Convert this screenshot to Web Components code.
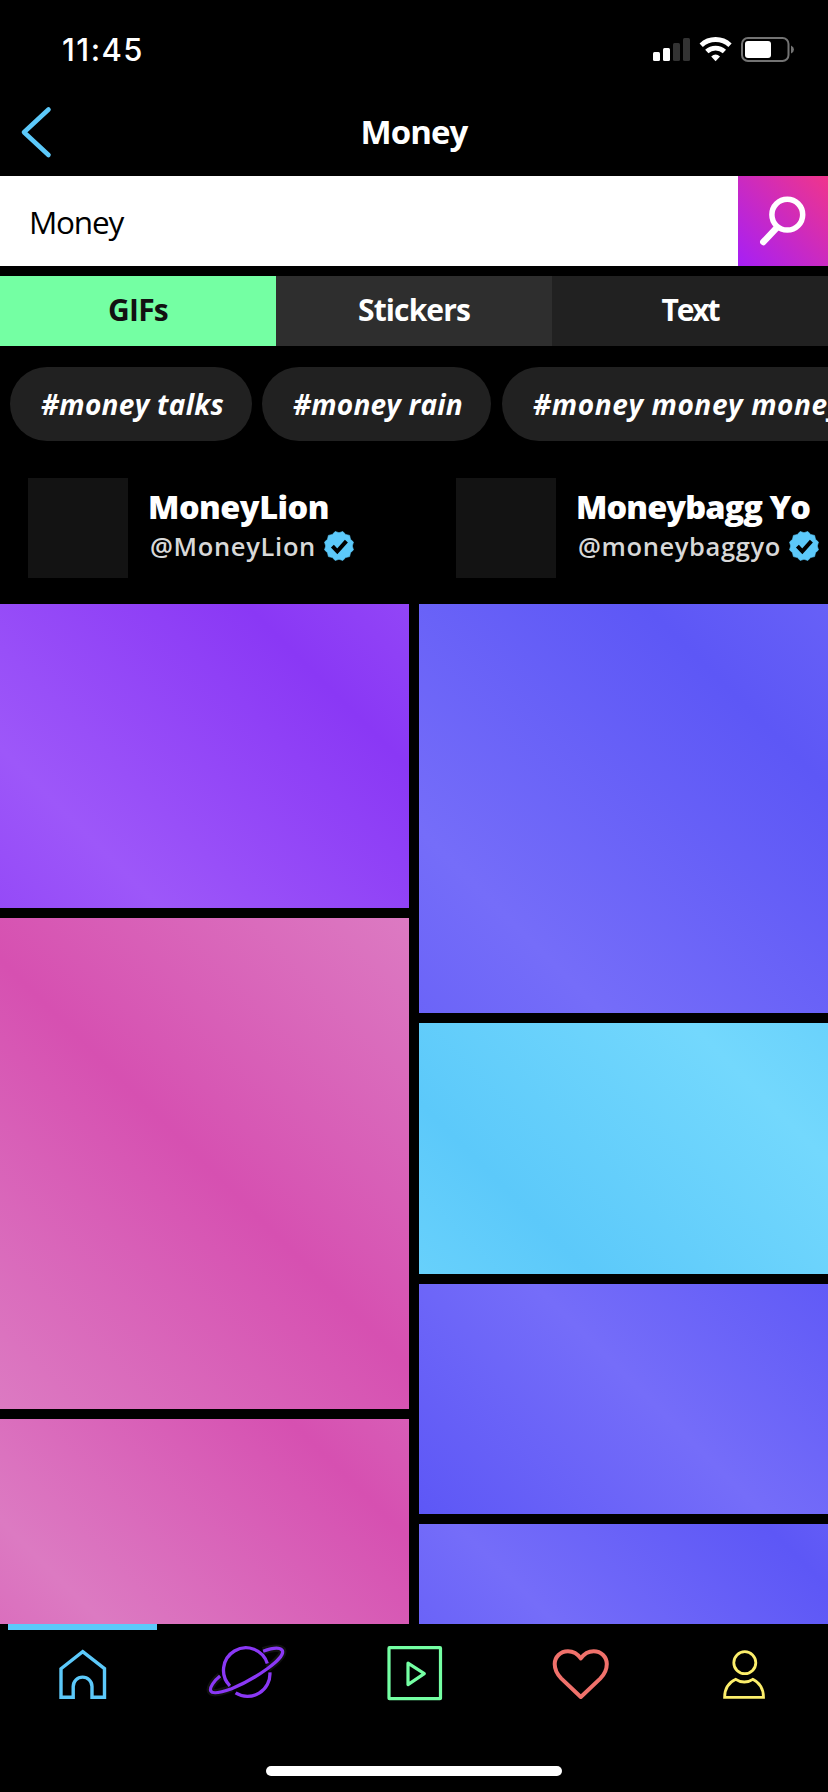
<!DOCTYPE html>
<html lang="en">
<head>
<meta charset="utf-8">
<title>Money</title>
<style>
html, body { margin: 0; background: #000; overflow: hidden; }
body { width: 828px; height: 1792px; font-family: "Open Sans", "Noto Sans", sans-serif; color: #fff; }
</style>
</head>
<body>
<gif-app></gif-app>
<script>
const define = (name, html, setup) => {
  const tpl = document.createElement('template');
  tpl.innerHTML = html;
  customElements.define(name, class extends HTMLElement {
    connectedCallback() {
      if (this.shadowRoot) return;
      this.attachShadow({ mode: 'open' }).appendChild(tpl.content.cloneNode(true));
      if (setup) setup(this, this.shadowRoot);
    }
  });
};

/* One line of text, tracked so that it takes exactly the given width. */
define('fit-text', `<style>
:host { display: block; white-space: pre; flex: none; }
span { display: inline-block; white-space: pre; }
</style><span></span>`, (el, root) => {
  const s = root.querySelector('span');
  s.textContent = el.getAttribute('text');
  const w = +el.getAttribute('w');
  s.style.letterSpacing = (w - s.getBoundingClientRect().width) / s.textContent.length + 'px';
  el.style.width = w + 'px';
});

define('status-bar', `<style>
:host { display: flex; height: 88px; padding: 12px 33px 0 62px; box-sizing: border-box; justify-content: space-between; }
fit-text { font: 500 31px/76px Inter, sans-serif; }
svg { display: block; margin-top: 20px; }
</style>
<fit-text text="11:45" w="82"></fit-text>
<svg width="144" height="34" viewBox="651 32 144 34" fill="#fff">
<rect x="653" y="52" width="7" height="9" rx="1.5"/><rect x="663" y="48" width="7" height="13" rx="1.5"/>
<rect x="673" y="43" width="7" height="18" rx="1.5" fill="#333"/><rect x="683" y="38" width="7" height="23" rx="1.5" fill="#333"/>
<g fill="none" stroke="#fff" stroke-width="4.8"><path d="M701.2 45.2A21 21 0 0 1 730 45.2"/><path d="M706.8 51.6A13 13 0 0 1 724.4 51.6"/></g>
<path d="M711.2 56.4Q715.6 52.8 720 56.4L715.6 61.2Z"/>
<rect x="742" y="38" width="46.5" height="23" rx="6" fill="none" stroke="#737373" stroke-width="2"/>
<rect x="745" y="41" width="26" height="17" rx="3"/><path d="M791 45.5q3 1.5 3 4t-3 4z" fill="#737373"/>
</svg>`);

define('title-bar', `<style>
:host { display: grid; grid-template-columns: 1fr auto 1fr; height: 88px; align-items: center; }
svg { display: block; margin-left: 18px; }
fit-text { font-weight: 700; font-size: 33px; line-height: 88px; }
</style>
<svg width="40" height="60" viewBox="18 102 40 60" fill="none" stroke="#5cc9fa" stroke-width="4.6" stroke-linecap="round" stroke-linejoin="round"><path d="M48.5 109.5L24 132.3L48.5 155"/></svg>
<fit-text text="Money" w="107"></fit-text><i></i>`);

define('search-bar', `<style>
:host { display: flex; height: 90px; background: #fff; color: #000; }
.field { flex: 1; padding-left: 29px; font-size: 31.5px; line-height: 91px; }
.go { width: 90px; background: linear-gradient(45deg, #a61ff6, #f0358b); }
svg { display: block; }
</style>
<div class="field"><fit-text text="Money" w="94"></fit-text></div>
<div class="go"><svg width="90" height="90" viewBox="738 176 90 90" fill="none" stroke="#fff" stroke-linecap="round"><circle cx="787.3" cy="214.7" r="15.4" stroke-width="5.5"/><path d="M776.5 228L763.3 242" stroke-width="6.4"/></svg></div>`);

define('tab-row', `<style>
:host { display: grid; grid-template-columns: repeat(3, 1fr); height: 70px; margin-top: 10px; font-weight: 700; font-size: 30px; line-height: 68px; }
div { display: flex; justify-content: center; background: #212121; }
div:nth-child(2) { background: #74ffa3; color: #121212; }
div:nth-child(3) { background: #2e2e2e; }
</style><div><fit-text text="GIFs" w="60"></fit-text></div><div><fit-text text="Stickers" w="112"></fit-text></div><div><fit-text text="Text" w="57"></fit-text></div>`);

define('tag-row', `<style>
:host { display: flex; gap: 10px; margin-top: 21px; padding-left: 10px; overflow: hidden; font: italic 700 28px/75px "Open Sans", sans-serif; }
div { flex: none; box-sizing: border-box; height: 74px; border-radius: 37px; background: #212121; padding-left: 31px; }
</style>
<div style="width:242px"><fit-text text="#money talks" w="183"></fit-text></div>
<div style="width:229px"><fit-text text="#money rain" w="170"></fit-text></div>
<div style="width:370px;margin-left:1px"><fit-text text="#money money money" w="310"></fit-text></div>`);

const scallop = Array.from({ length: 24 }, (_, i) => {
  const r = i % 2 ? 15 : 13.3, a = i * Math.PI / 12;
  return (15 + r * Math.sin(a)).toFixed(2) + ',' + (15 - r * Math.cos(a)).toFixed(2);
}).join(' ');

define('channel-card', `<style>
:host { display: flex; flex: none; width: 428px; }
.pic { width: 100px; height: 100px; background: #131313; margin-right: 20px; flex: none; }
.col { padding-top: 11px; }
.name { font-weight: 800; font-size: 32.5px; line-height: 36px; }
.row { display: flex; align-items: center; height: 41px; }
.handle { font-weight: 600; font-size: 25.5px; line-height: 42px; color: #d8d8d8; margin: 0 8px 0 2px; }
svg { display: block; flex: none; }
</style>
<div class="pic"></div><div class="col"><fit-text class="name"></fit-text><div class="row"><fit-text class="handle"></fit-text>
<svg width="30" height="30" viewBox="0 0 30 30"><polygon points="${scallop}" fill="#5cc9fa" stroke="#5cc9fa" stroke-width=".6" stroke-linejoin="round"/><path d="M8.4 15.2L13.3 20.3L22.4 10.1" fill="none" stroke="#000" stroke-width="4"/></svg></div></div>`, (el, root) => {
  /* The nested lines read their attributes when they are connected, so they are rebuilt with the card's values. */
  for (const k of ['name', 'handle']) {
    const t = document.createElement('fit-text');
    t.className = k;
    t.setAttribute('text', el.getAttribute(k));
    t.setAttribute('w', el.getAttribute(k + '-w'));
    root.querySelector('.' + k).replaceWith(t);
  }
});

define('channel-row', `<style>
:host { display: flex; height: 126px; margin-top: 37px; padding-left: 28px; overflow: hidden; box-sizing: border-box; }
</style><channel-card name="MoneyLion" name-w="181" handle="@MoneyLion" handle-w="166"></channel-card><channel-card name="Moneybagg Yo" name-w="234" handle="@moneybaggyo" handle-w="203"></channel-card>`);

define('gif-tile', `<style>:host { display: block; flex: none; }</style>`, el => {
  const [a, b, p, q] = el.getAttribute('fill').split(' ');
  el.style.height = el.getAttribute('h') + 'px';
  el.style.background = `repeating-linear-gradient(45deg, ${a} ${p}%, ${b} ${q}%, ${a} ${2 * q - p}%)`;
});

define('gif-wall', `<style>
:host { display: grid; grid-template-columns: 409px 409px; gap: 10px; height: 1020px; overflow: hidden; }
div { display: flex; flex-direction: column; gap: 10px; }
</style>
<div>
<gif-tile h="304" fill="#9d57f9 #8a38f5 22.5 77"></gif-tile>
<gif-tile h="491" fill="#dc7ac2 #d650b1 0 50"></gif-tile>
<gif-tile h="205" fill="#dc7ac2 #d650b1 17 80.5"></gif-tile>
</div><div>
<gif-tile h="409" fill="#756df9 #5d57f6 22.5 77.5"></gif-tile>
<gif-tile h="251" fill="#5cc9fa #73d8fd 26 79"></gif-tile>
<gif-tile h="230" fill="#5d57f6 #756df9 0 54"></gif-tile>
<gif-tile h="100" fill="#756df9 #5d57f6 27 87.5"></gif-tile>
</div>`);

define('nav-bar', `<style>
:host { display: flex; flex-direction: column; height: 168px; background: #000; }
.mark { width: 149px; height: 6px; margin-left: 8px; background: #5cc9fa; }
.icons { display: grid; grid-template-columns: repeat(5, 1fr); justify-items: center; margin-top: 10px; height: 64px; }
svg { display: block; fill: none; }
.home { width: 296px; height: 10px; border-radius: 5px; background: #fff; margin: 62px auto 0; }
</style>
<div class="mark"></div>
<div class="icons">
<svg width="100" height="64" viewBox="32.8 1640 100 64" stroke="#5cc9fa" stroke-width="3.4"><path d="M82.5 1651.6L104.3 1668.7V1697.3H91.8V1686.5a9.4 9.4 0 0 0-18.8 0V1697.3H60.8V1668.7Z"/></svg>
<svg width="100" height="64" viewBox="198.4 1640 100 64" stroke="#8a38f5" stroke-width="3.3">
<g stroke="#111" stroke-width="7.5"><path d="M263.5 1650.8C272 1648 280 1647.2 282.7 1650C285 1654 277 1662 268 1668.5M232 1688.3C222 1692 213 1694.5 211 1691C209.5 1688 214 1681 220.5 1676"/></g>
<path d="M230.3 1685.9A22.4 22.4 0 1 1 267.7 1663.6M270.3 1672.3A22.4 22.4 0 0 1 236 1692.9"/>
<path d="M263.5 1651.2C272 1648.2 280 1647.2 282.5 1650.2C285 1654 277 1662 268 1668.5C257 1676.5 245 1683.5 232 1688.7C222 1692.3 213 1694.5 211.2 1691C209.7 1688 214 1681 220.5 1676"/></svg>
<svg width="100" height="64" viewBox="364 1640 100 64" stroke="#74ffa3" stroke-width="3.2"><rect x="389" y="1647.7" width="51.5" height="51" rx=".5"/><path d="M408 1663.2L424.3 1673.6L408 1684.6Z" stroke-linejoin="round"/></svg>
<svg width="100" height="64" viewBox="529.6 1640 100 64" stroke="#f0716b" stroke-width="4"><path d="M580.4 1658.5C577 1653.5 572 1651.2 567.5 1651.2C560 1651.2 554.3 1657 554.3 1664C554.3 1670 557 1674.6 561 1678.6L580.4 1697L599.8 1678.6C603.8 1674.6 606.4 1670 606.4 1664C606.4 1657 600.8 1651.2 593.3 1651.2C588.8 1651.2 583.8 1653.5 580.4 1658.5Z" stroke-linejoin="round"/></svg>
<svg width="100" height="64" viewBox="695.2 1640 100 64" stroke="#fcee6b" stroke-width="2.8"><circle cx="745" cy="1662.7" r="11"/><path d="M736 1679.3C728 1683 724.8 1690 724.8 1697.4H763.7C763.7 1690 760.5 1683 753 1679.3C748 1682.9 741 1682.9 736 1679.3Z"/></svg>
</div>
<div class="home"></div>`);

define('gif-app', `<style>
:host { display: flex; flex-direction: column; width: 828px; height: 1792px; background: #000; overflow: hidden; }
</style>
<status-bar></status-bar><title-bar></title-bar><search-bar></search-bar><tab-row></tab-row><tag-row></tag-row><channel-row></channel-row><gif-wall></gif-wall><nav-bar></nav-bar>`);
</script>
</body>
</html>
